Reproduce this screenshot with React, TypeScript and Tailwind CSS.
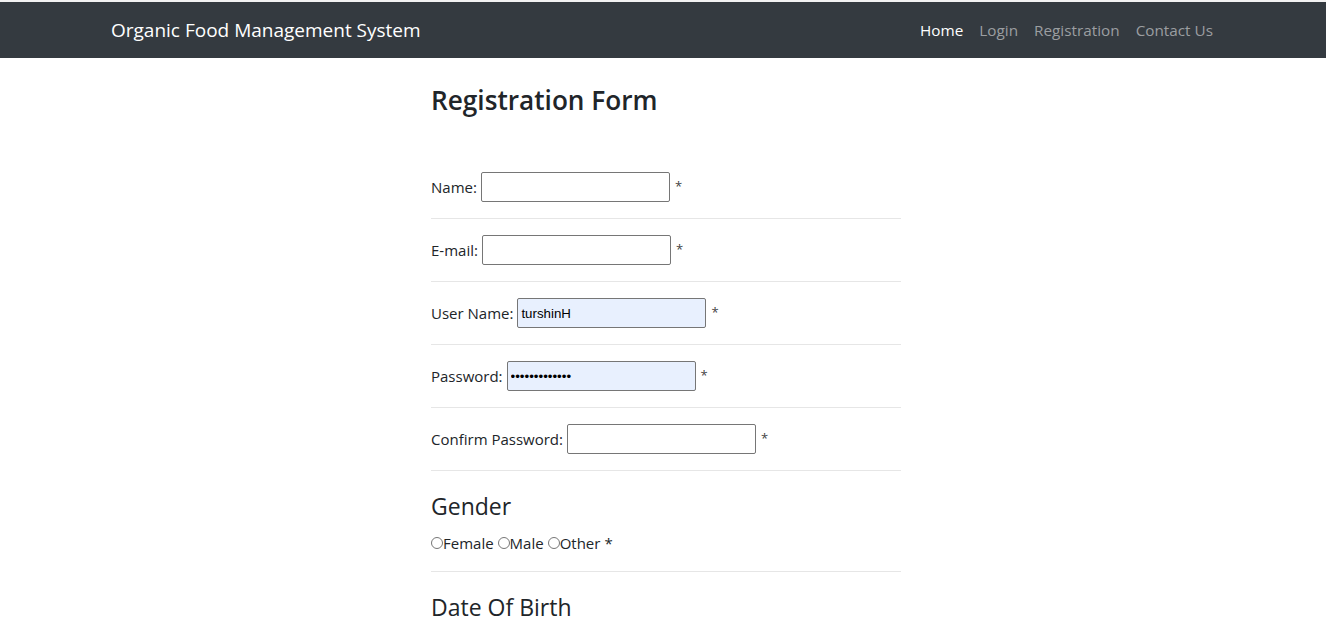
import React from 'react';

const font = { fontFamily: '"Open Sans", "Noto Sans", sans-serif' };

type Field = { label: string; type: string; value?: string; filled?: boolean };

const fields: Field[] = [
  { label: 'Name:', type: 'text' },
  { label: 'E-mail:', type: 'email' },
  { label: 'User Name:', type: 'text', value: 'turshinH', filled: true },
  { label: 'Password:', type: 'password', value: 'turshin123456', filled: true },
  { label: 'Confirm Password:', type: 'password' },
];

function Row({ f }: { f: Field }) {
  return (
    <>
      <div className="py-4 flex items-center h-[62px] text-[15px] text-[#212529]">
        <label>{f.label}</label>
        <input
          type={f.type}
          defaultValue={f.value}
          readOnly
          className={`ml-[4px] w-[189px] h-[30px] border border-[#767676] rounded-[2px] px-[3px] text-[13.3px] text-black outline-none ${
            f.filled ? 'bg-[#e8f0fe]' : 'bg-white'
          }`}
          style={{ fontFamily: '"Liberation Sans", Arial, sans-serif' }}
        />
        <span className="ml-[5px] text-[13px] text-[#444]">*</span>
      </div>
      <hr className="border-0 border-t border-[#e6e6e6]" />
    </>
  );
}

export default function App() {
  return (
    <div className="min-h-screen bg-white" style={font}>
      <div className="h-[2px] bg-[#f2f2f2]" />
      <nav className="bg-[#343a40] h-[56px]">
        <div className="max-w-[1140px] mx-auto px-[15px] h-full flex items-center justify-between">
          <a className="text-white text-[19px] pl-[3px]">Organic Food Management System</a>
          <ul className="flex text-[15.3px] mr-[-3px]">
            <li className="px-2 text-white">Home</li>
            <li className="px-2 text-[#9b9ea1]">Login</li>
            <li className="px-2 text-[#9b9ea1]">Registration</li>
            <li className="px-2 text-[#9b9ea1]">Contact Us</li>
          </ul>
        </div>
      </nav>

      <div className="max-w-[1140px] mx-auto">
        <div className="ml-[338px] w-[470px]">
          <h3 className="mt-[25px] text-[26.2px] font-semibold text-[#212529] leading-[34px]">
            Registration Form
          </h3>
          <div className="h-[39px]" />
          {fields.map((f) => (
            <Row key={f.label} f={f} />
          ))}
          <div className="pt-[21px] pb-[16px] text-[#212529]">
            <h4 className="text-[23px] leading-[29px]">Gender</h4>
            <div className="mt-[11px] flex items-center text-[15px]">
              <label className="flex items-center">
                <input type="radio" name="g" className="m-0 w-[12px] h-[12px]" />
                Female
              </label>
              <label className="flex items-center ml-[4px]">
                <input type="radio" name="g" className="m-0 w-[12px] h-[12px]" />
                Male
              </label>
              <label className="flex items-center ml-[4px]">
                <input type="radio" name="g" className="m-0 w-[12px] h-[12px]" />
                Other
              </label>
              <span className="ml-[4px]">*</span>
            </div>
          </div>
          <hr className="border-0 border-t border-[#e6e6e6]" />
          <div className="pt-[21px] text-[#212529]">
            <h4 className="text-[23px] leading-[29px]">Date Of Birth</h4>
          </div>
        </div>
      </div>
    </div>
  );
}
